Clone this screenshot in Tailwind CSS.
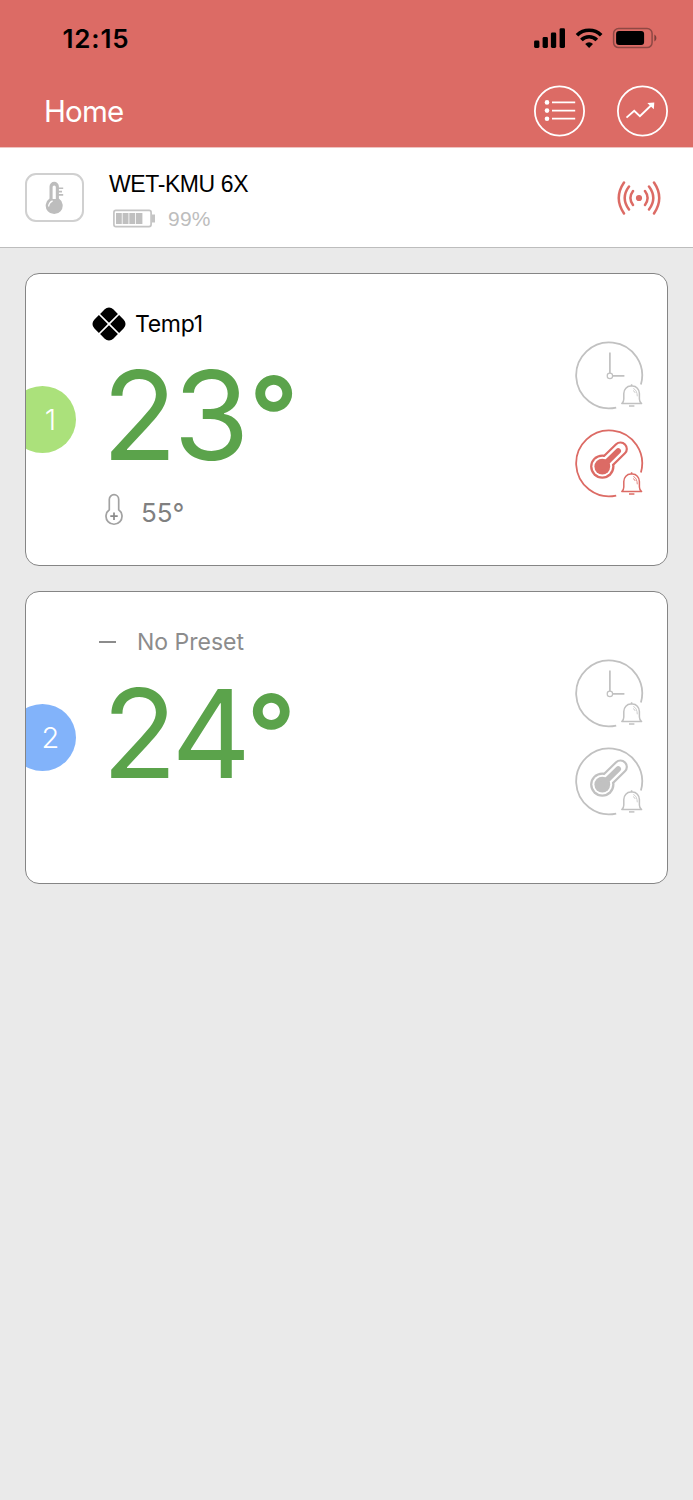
<!DOCTYPE html>
<html lang="en">
<head>
<meta charset="utf-8">
<title>Home</title>
<script src="https://cdn.jsdelivr.net/npm/@tailwindcss/browser@4"></script>
</head>
<body class="bg-[#eaeaea] font-['Inter',sans-serif]">
<svg class="hidden">
  <defs>
    <symbol id="ring" viewBox="0 0 70 70">
      <path d="M65.900 43.400A33 33 0 1 0 41.200 66.600" fill="none" stroke="currentColor" stroke-width="1.800"/>
      <path d="M46.800 62.600c1.600-1.200 2-2.600 2-4.600v-5.500c0-4.400 3.200-7.400 6.900-7.400h1.800c3.700 0 6.900 3 6.900 7.400V58c0 2 .6 3.400 2.200 4.600zM56.600 45v-1.800" fill="none" stroke="currentColor" stroke-width="1.500" stroke-linejoin="round"/>
      <path d="M54 64.900h5.400" stroke="currentColor" stroke-width="1.500"/>
      <path d="M58.300 47.500q3.800 1.400 4 7.800M58 49.600q1.800.6 2.200 2.400" fill="none" stroke="currentColor" stroke-width=".8"/>
    </symbol>
    <symbol id="clock" viewBox="0 0 70 70">
      <use href="#ring" width="70" height="70"/>
      <path d="M34.900 11.500V32M38 34.900H49.400" stroke="currentColor" stroke-width="1.700"/>
      <circle cx="34.900" cy="34.900" r="2.700" fill="none" stroke="currentColor" stroke-width="1.200"/>
    </symbol>
    <symbol id="probe" viewBox="0 0 70 70">
      <use href="#ring" width="70" height="70"/>
      <g stroke-linecap="round">
        <circle cx="27.300" cy="37.600" r="12.200" fill="currentColor"/>
        <path d="M27.300 37.600L45.500 19.800" stroke="currentColor" stroke-width="14.800"/>
        <circle cx="27.300" cy="37.600" r="9.900" fill="#fff"/>
        <path d="M27.300 37.600L45.500 19.800" stroke="#fff" stroke-width="10.500"/>
        <circle cx="27.300" cy="37.600" r="7.900" fill="currentColor"/>
        <path d="M27.300 37.600L43.200 22" stroke="currentColor" stroke-width="5.700"/>
      </g>
    </symbol>
  </defs>
</svg>

<header class="h-[148px] bg-[#dc6b65] border-b border-[#efc4c1]">
  <div class="h-[74px] flex items-center justify-between pl-[62.5px] pr-[36.500px] pr-[36px] pt-[3px]">
    <span class="text-[26px] font-semibold leading-none tracking-[0.8px]">12:15</span>
    <svg width="125" height="24" viewBox="0.600 0 125 24">
      <rect x="2.700" y="13.500" width="5.300" height="7.500" rx="1.400"/>
      <rect x="11.200" y="10" width="5.300" height="11" rx="1.400"/>
      <rect x="19.500" y="5.500" width="5.300" height="15.500" rx="1.400"/>
      <rect x="28.200" y="1.200" width="5.400" height="19.800" rx="1.400"/>
      <g fill="none" stroke="#000" stroke-width="3.700">
        <path d="M45.600 8.200a17.300 17.300 0 0 1 24.200 0"/>
        <path d="M50 13a10.800 10.800 0 0 1 15.400 0"/>
      </g>
      <path d="M57.700 20.900l-3.900-4a5.600 5.600 0 0 1 7.800 0z"/>
      <rect x="82.200" y="1.600" width="38.500" height="19" rx="5" fill="none" stroke="#8e4844" stroke-width="1.500"/>
      <rect x="84.700" y="4.100" width="28" height="13.800" rx="3"/>
      <path d="M123 7.500c2.600 1.500 2.600 5.500 0 7z" fill="#7c3f3b"/>
    </svg>
  </div>
  <div class="h-[73px] flex items-center pl-[44px] pr-[25px]">
    <h1 class="flex-1 text-white text-[29.5px] leading-none tracking-[-0.8px] pt-[2px]">Home</h1>
    <svg class="mr-[31px]" width="52" height="52" viewBox="0 0 52 52" fill="none" stroke="#fff">
      <circle cx="26.500" cy="26" r="24.600" stroke-width="1.800"/>
      <path d="M19 17.400h23.200M19 25.600h23.200M19 33.700h23.200" stroke-width="1.700"/>
      <g fill="#fff" stroke="none"><circle cx="14" cy="17.400" r="2.300"/><circle cx="14" cy="25.600" r="2.300"/><circle cx="14" cy="33.700" r="2.300"/></g>
    </svg>
    <svg width="52" height="52" viewBox="0 0 52 52" fill="none" stroke="#fff">
      <circle cx="26.500" cy="26" r="24.600" stroke-width="1.800"/>
      <path d="M10.500 32.600l7.700-6.900 5.700 5.400L35.500 20" stroke-width="1.900"/>
      <path d="M31.300 18l7-.4-.5 6.700z" fill="#fff" stroke="none"/>
    </svg>
  </div>
</header>

<section class="h-[100px] bg-white border-b border-[#bdbdbd] flex items-center pl-[25px] pr-[32px]">
  <div class="w-[59px] h-[49px] rounded-[11px] border-2 border-[#d0d0d0] flex items-center justify-center">
    <svg width="22" height="36" viewBox="0 0 22 36" fill="#bdbdbd">
      <path d="M5.500 6.500a4.700 4.700 0 0 1 9.400 0v12a8.500 8.500 0 1 1-9.400 0z"/>
      <path d="M8.600 7a1.600 1.600 0 0 1 3.200 0V19H8.600z" fill="#fff"/>
      <path d="M4.600 26.500q.3-4 4-5.700" stroke="#fff" stroke-width="1.300" fill="none"/>
      <path d="M14 8.300h5.200M14 11.600h4M14 14.900h5.200" stroke="#bdbdbd" stroke-width="1.600"/>
    </svg>
  </div>
  <div class="ml-[25px] flex-1 flex flex-col gap-[11px] pt-[6px] font-['Liberation_Sans',sans-serif]">
    <div class="text-[23px] leading-[24px] tracking-[-0.4px]">WET-KMU 6X</div>
    <div class="flex items-center h-[22px] pl-[4px] gap-[12px]">
      <svg width="43" height="20" viewBox="0 -0.500 43 20">
        <rect x=".9" y="1.900" width="37.200" height="16.200" rx="2" fill="none" stroke="#c4c4c4" stroke-width="1.700"/>
        <path d="M39 6h3v8h-3z" fill="#c4c4c4"/>
        <path d="M3 4.500h5.800v11H3zM9.600 4.500h5.900v11H9.600zM16.300 4.500h5.900v11h-5.900zM23 4.500h6.400v11H23z" fill="#c0c0c0"/>
      </svg>
      <span class="text-[21px] leading-none text-[#bdbdbd] tracking-[0.2px]">99%</span>
    </div>
  </div>
  <svg width="44" height="40" viewBox="0 0 44 40" fill="none" stroke="#dc6b65" stroke-width="2.500" stroke-linecap="round">
    <circle cx="22" cy="20" r="3.100" fill="#dc6b65" stroke="none"/>
    <path d="M16 13q-5.200 7 0 14M12 8.500q-8.600 11.500 0 23M7 4.500q-10.500 15.500 0 31"/>
    <path d="M28 13q5.200 7 0 14M32 8.500q8.600 11.500 0 23M37 4.500q10.500 15.500 0 31"/>
  </svg>
</section>

<main class="px-[25px] pt-[25px] flex flex-col gap-[25px]">
  <article class="h-[293px] bg-white border border-[#858585] rounded-[14px] overflow-hidden flex pr-[22px]">
    <div class="w-[50px] shrink-0 self-center overflow-hidden flex justify-end">
      <div class="size-[67px] shrink-0 rounded-full bg-[#abe17b] text-white text-[29px] font-light leading-none flex items-center justify-center pl-[16px]">1</div>
    </div>
    <div class="flex-1 pl-[15px] pt-[32px]">
      <div class="flex items-center h-[36px] gap-[8px]">
        <svg width="36" height="36" viewBox="1 1 34 34"><g transform="rotate(45 18 18)"><path d="M17.200 17.200H5.300V11a5.700 5.700 0 0 1 5.700-5.700h6.200zM18.800 17.200V5.300H25a5.700 5.700 0 0 1 5.700 5.700v6.200zM17.200 18.800V30.700H11A5.700 5.700 0 0 1 5.300 25v-6.200zM18.800 18.800H30.700V25a5.700 5.700 0 0 1-5.700 5.700h-6.200z"/></g></svg>
        <span class="text-[23px] leading-none tracking-[-0.3px]">Temp1</span>
      </div>
      <div class="flex pl-[11px] mt-[14px] h-[120px] leading-[120px] text-[123px] text-[#5ba34b]"><span class="tracking-[-3.5px]">23</span><span class="text-[108px] font-semibold -mt-[1px] ml-[3px]">°</span></div>
      <div class="flex items-center mt-[14px] h-[40px] pl-[14px] gap-[18px] text-[#808080]">
        <svg width="18" height="34" viewBox="0 0 18 34" fill="none" stroke="#a2a2a2" stroke-width="1.700"><path d="M4.300 16.800V6.400a4.700 4.700 0 0 1 9.400 0v10.400a8 8 0 1 1-9.400 0z"/><path d="M9 19.500v7.400M5.300 23.200h7.400" stroke="#8a8a8a"/></svg>
        <span class="text-[26px] leading-none pt-[6px]">55°</span>
      </div>
    </div>
    <div class="pt-[67px] flex flex-col gap-[18px]">
      <svg class="text-[#c1c1c1]" width="70" height="70"><use href="#clock"/></svg>
      <svg class="text-[#dc6b65]" width="70" height="70"><use href="#probe"/></svg>
    </div>
  </article>

  <article class="h-[293px] bg-white border border-[#858585] rounded-[14px] overflow-hidden flex pr-[22px]">
    <div class="w-[50px] shrink-0 self-center overflow-hidden flex justify-end">
      <div class="size-[67px] shrink-0 rounded-full bg-[#82b3fa] text-white text-[29px] font-light leading-none flex items-center justify-center pl-[16px]">2</div>
    </div>
    <div class="flex-1 pl-[15px] pt-[32px]">
      <div class="flex items-center h-[36px] pl-[8px] gap-[21px] text-[#8c8c8c]">
        <span class="w-[17px] h-[2px] bg-[#8c8c8c]"></span>
        <span class="text-[23px] leading-none">No Preset</span>
      </div>
      <div class="flex pl-[11px] mt-[14px] h-[120px] leading-[120px] text-[123px] text-[#5ba34b]"><span class="tracking-[-3.5px]">24</span><span class="text-[108px] font-semibold -mt-[1px] -ml-[1px]">°</span></div>
    </div>
    <div class="pt-[67px] flex flex-col gap-[18px]">
      <svg class="text-[#c1c1c1]" width="70" height="70"><use href="#clock"/></svg>
      <svg class="text-[#c1c1c1]" width="70" height="70"><use href="#probe"/></svg>
    </div>
  </article>
</main>
</body>
</html>
